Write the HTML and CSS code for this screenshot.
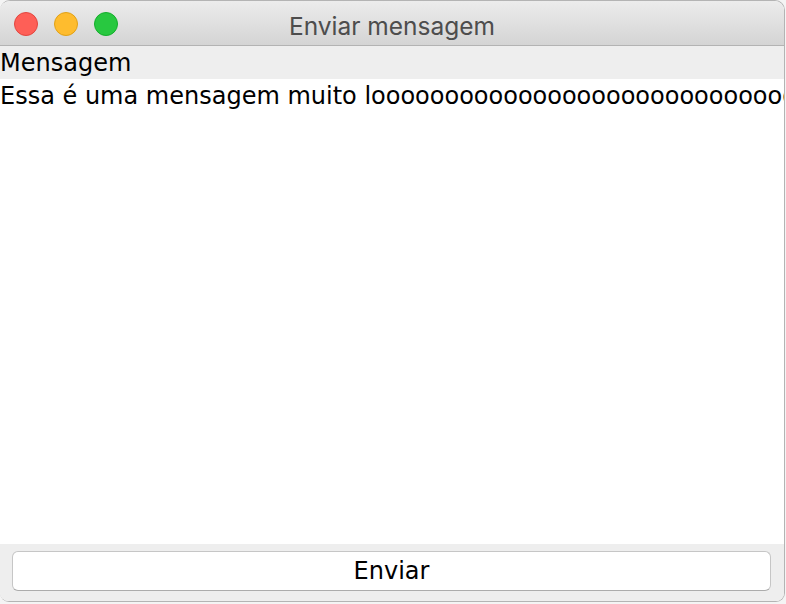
FILE: index.html
```html
<!DOCTYPE html>
<html lang="pt">
<head>
<meta charset="utf-8">
<title>Enviar mensagem</title>
<link rel="stylesheet" href="styles.css">
</head>
<body>
<div class="window">
  <div class="titlebar">
    <div class="lights">
      <span class="light red"></span>
      <span class="light yellow"></span>
      <span class="light green"></span>
    </div>
    <div class="title">Enviar mensagem</div>
  </div>
  <div class="header">Mensagem</div>
  <div class="content">
    <div class="row">Essa é uma mensagem muito looooooooooooooooooooooooooooooooooooooooooooonga</div>
  </div>
  <div class="footer">
    <button class="send">Enviar</button>
  </div>
</div>
</body>
</html>
```

FILE: styles.css
```css
html, body {
  margin: 0;
  padding: 0;
  background: #f4f4f4;
}
body {
  width: 786px;
  height: 604px;
  overflow: hidden;
}
.window {
  box-sizing: border-box;
  width: 785px;
  height: 602px;
  border: 1px solid #b4b4b4;
  border-left: none;
  border-radius: 10px 10px 9px 9px;
  overflow: hidden;
  display: flex;
  flex-direction: column;
  background: #ffffff;
  font-family: "DejaVu Sans", sans-serif;
  font-size: 24px;
  color: #000;
}
.titlebar {
  position: relative;
  height: 44px;
  flex: none;
  background: linear-gradient(#ececec, #d4d4d4);
  border-bottom: 1px solid #b3b3b3;
}
.lights {
  position: absolute;
  left: 14px;
  top: 11px;
  display: flex;
  gap: 16px;
}
.light {
  box-sizing: border-box;
  width: 24px;
  height: 24px;
  border-radius: 50%;
}
.red { background: #fe5f57; border: 1px solid #e2463f; }
.yellow { background: #febc2e; border: 1px solid #e1a116; }
.green { background: #28c840; border: 1px solid #14ae2c; }
.title {
  box-sizing: border-box;
  height: 44px;
  padding-top: 6px;
  line-height: 38px;
  text-align: center;
  font-family: Inter, "Liberation Sans", sans-serif;
  font-size: 24.5px;
  color: #4d4d4d;
}
.header {
  flex: none;
  box-sizing: border-box;
  height: 33px;
  padding-top: 2px;
  line-height: 31px;
  background: #eeeeee;
  white-space: nowrap;
}
.content {
  flex: 1;
  overflow: hidden;
  background: #ffffff;
}
.row {
  box-sizing: border-box;
  height: 33px;
  padding-top: 2px;
  line-height: 31px;
  white-space: nowrap;
  overflow: hidden;
}
.footer {
  flex: none;
  box-sizing: border-box;
  height: 57px;
  padding: 7px 13px 9px 12px;
  background: #eeeeee;
}
.send {
  display: block;
  box-sizing: border-box;
  width: 100%;
  height: 40px;
  padding: 1px 0 0;
  line-height: 37px;
  background: #ffffff;
  border: 1px solid #c6c6c6;
  border-bottom-color: #acacac;
  border-radius: 6px;
  font-family: "DejaVu Sans", sans-serif;
  font-size: 24px;
  color: #000;
}
```
